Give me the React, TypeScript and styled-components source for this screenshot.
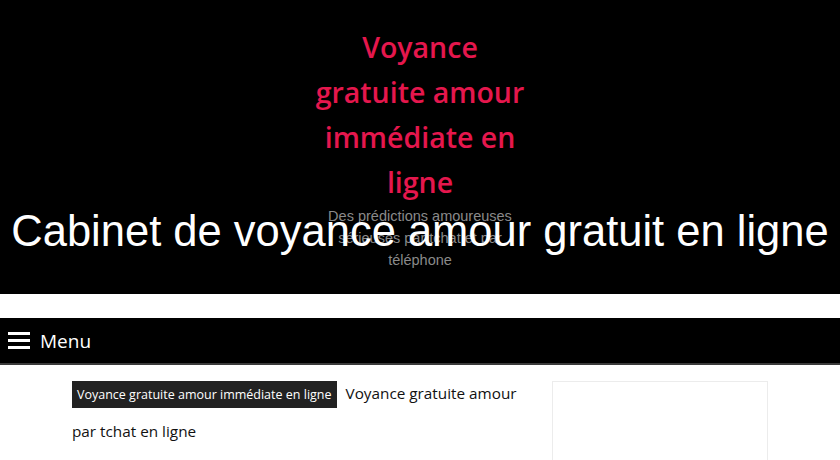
import React from 'react';
import styled, { createGlobalStyle } from 'styled-components';

const GlobalStyle = createGlobalStyle`
  html, body {
    margin: 0;
    padding: 0;
    background: #ffffff;
  }
  body {
    font-family: 'Open Sans', 'Liberation Sans', sans-serif;
    color: #111;
  }
`

const Page = styled.div`
  width: 840px;
  height: 460px;
  overflow: hidden;
`

const Header = styled.header`
  position: relative;
  height: 294px;
  background: #000;
  display: flex;
  flex-direction: column;
  align-items: center;
  padding-top: 25px;
  box-sizing: border-box;
`

const Logo = styled.div`
  width: 216px;
  text-align: center;
  font-family: 'Open Sans', sans-serif;
  font-weight: 600;
  font-size: 28.5px;
  line-height: 45px;
  color: #e5174d;
`

const Tagline = styled.p`
  margin: 0;
  width: 200px;
  text-align: center;
  font-family: 'Liberation Sans', Arial, sans-serif;
  font-size: 14.5px;
  line-height: 22px;
  color: #8a8a8a;
`

const SiteTitle = styled.h1`
  position: absolute;
  left: 0;
  right: 0;
  top: 206px;
  margin: 0;
  text-align: center;
  font-family: 'Liberation Sans', Arial, sans-serif;
  font-weight: normal;
  font-size: 43.5px;
  line-height: 50px;
  color: #fff;
  white-space: nowrap;
`

const Spacer = styled.div`
  height: 24px;
`

const MenuBar = styled.nav`
  height: 45px;
  background: #000;
  border-bottom: 2px solid #3a3a3a;
  display: flex;
  align-items: center;
  gap: 10px;
  padding: 0 8px;
`

const Burger = styled.span`
  display: flex;
  flex-direction: column;
  gap: 4px;
  width: 22px;

  span {
    display: block;
    height: 3px;
    background: #fff;
  }
`

const MenuLabel = styled.span`
  color: #fff;
  font-size: 19px;
  font-family: 'Open Sans', sans-serif;
`

const Content = styled.div`
  width: 696px;
  margin: 9px auto 0;
  display: flex;
  gap: 24px;
`

const Main = styled.main`
  flex: 1;
  font-size: 15.3px;
  line-height: 38px;
`

const Tag = styled.span`
  display: inline-block;
  background: #222;
  color: #fff;
  font-size: 12.5px;
  line-height: 27px;
  padding: 0 5px;
  margin-right: 9px;
  vertical-align: middle;
`

const Sidebar = styled.aside`
  width: 216px;
  height: 120px;
  border: 1px solid #ececec;
  box-sizing: border-box;
  margin-top: 7px;
`

export default function App() {
  return (
    <Page>
      <GlobalStyle />
      <Header>
        <Logo>Voyance gratuite amour immédiate en ligne</Logo>
        <Tagline>Des prédictions amoureuses sérieuses par tchat et par téléphone</Tagline>
        <SiteTitle>Cabinet de voyance amour gratuit en ligne</SiteTitle>
      </Header>
      <Spacer />
      <MenuBar>
        <Burger>
          <span />
          <span />
          <span />
        </Burger>
        <MenuLabel>Menu</MenuLabel>
      </MenuBar>
      <Content>
        <Main>
          <Tag>Voyance gratuite amour immédiate en ligne</Tag>
          Voyance gratuite amour par tchat en ligne
        </Main>
        <Sidebar />
      </Content>
    </Page>
  );
}
